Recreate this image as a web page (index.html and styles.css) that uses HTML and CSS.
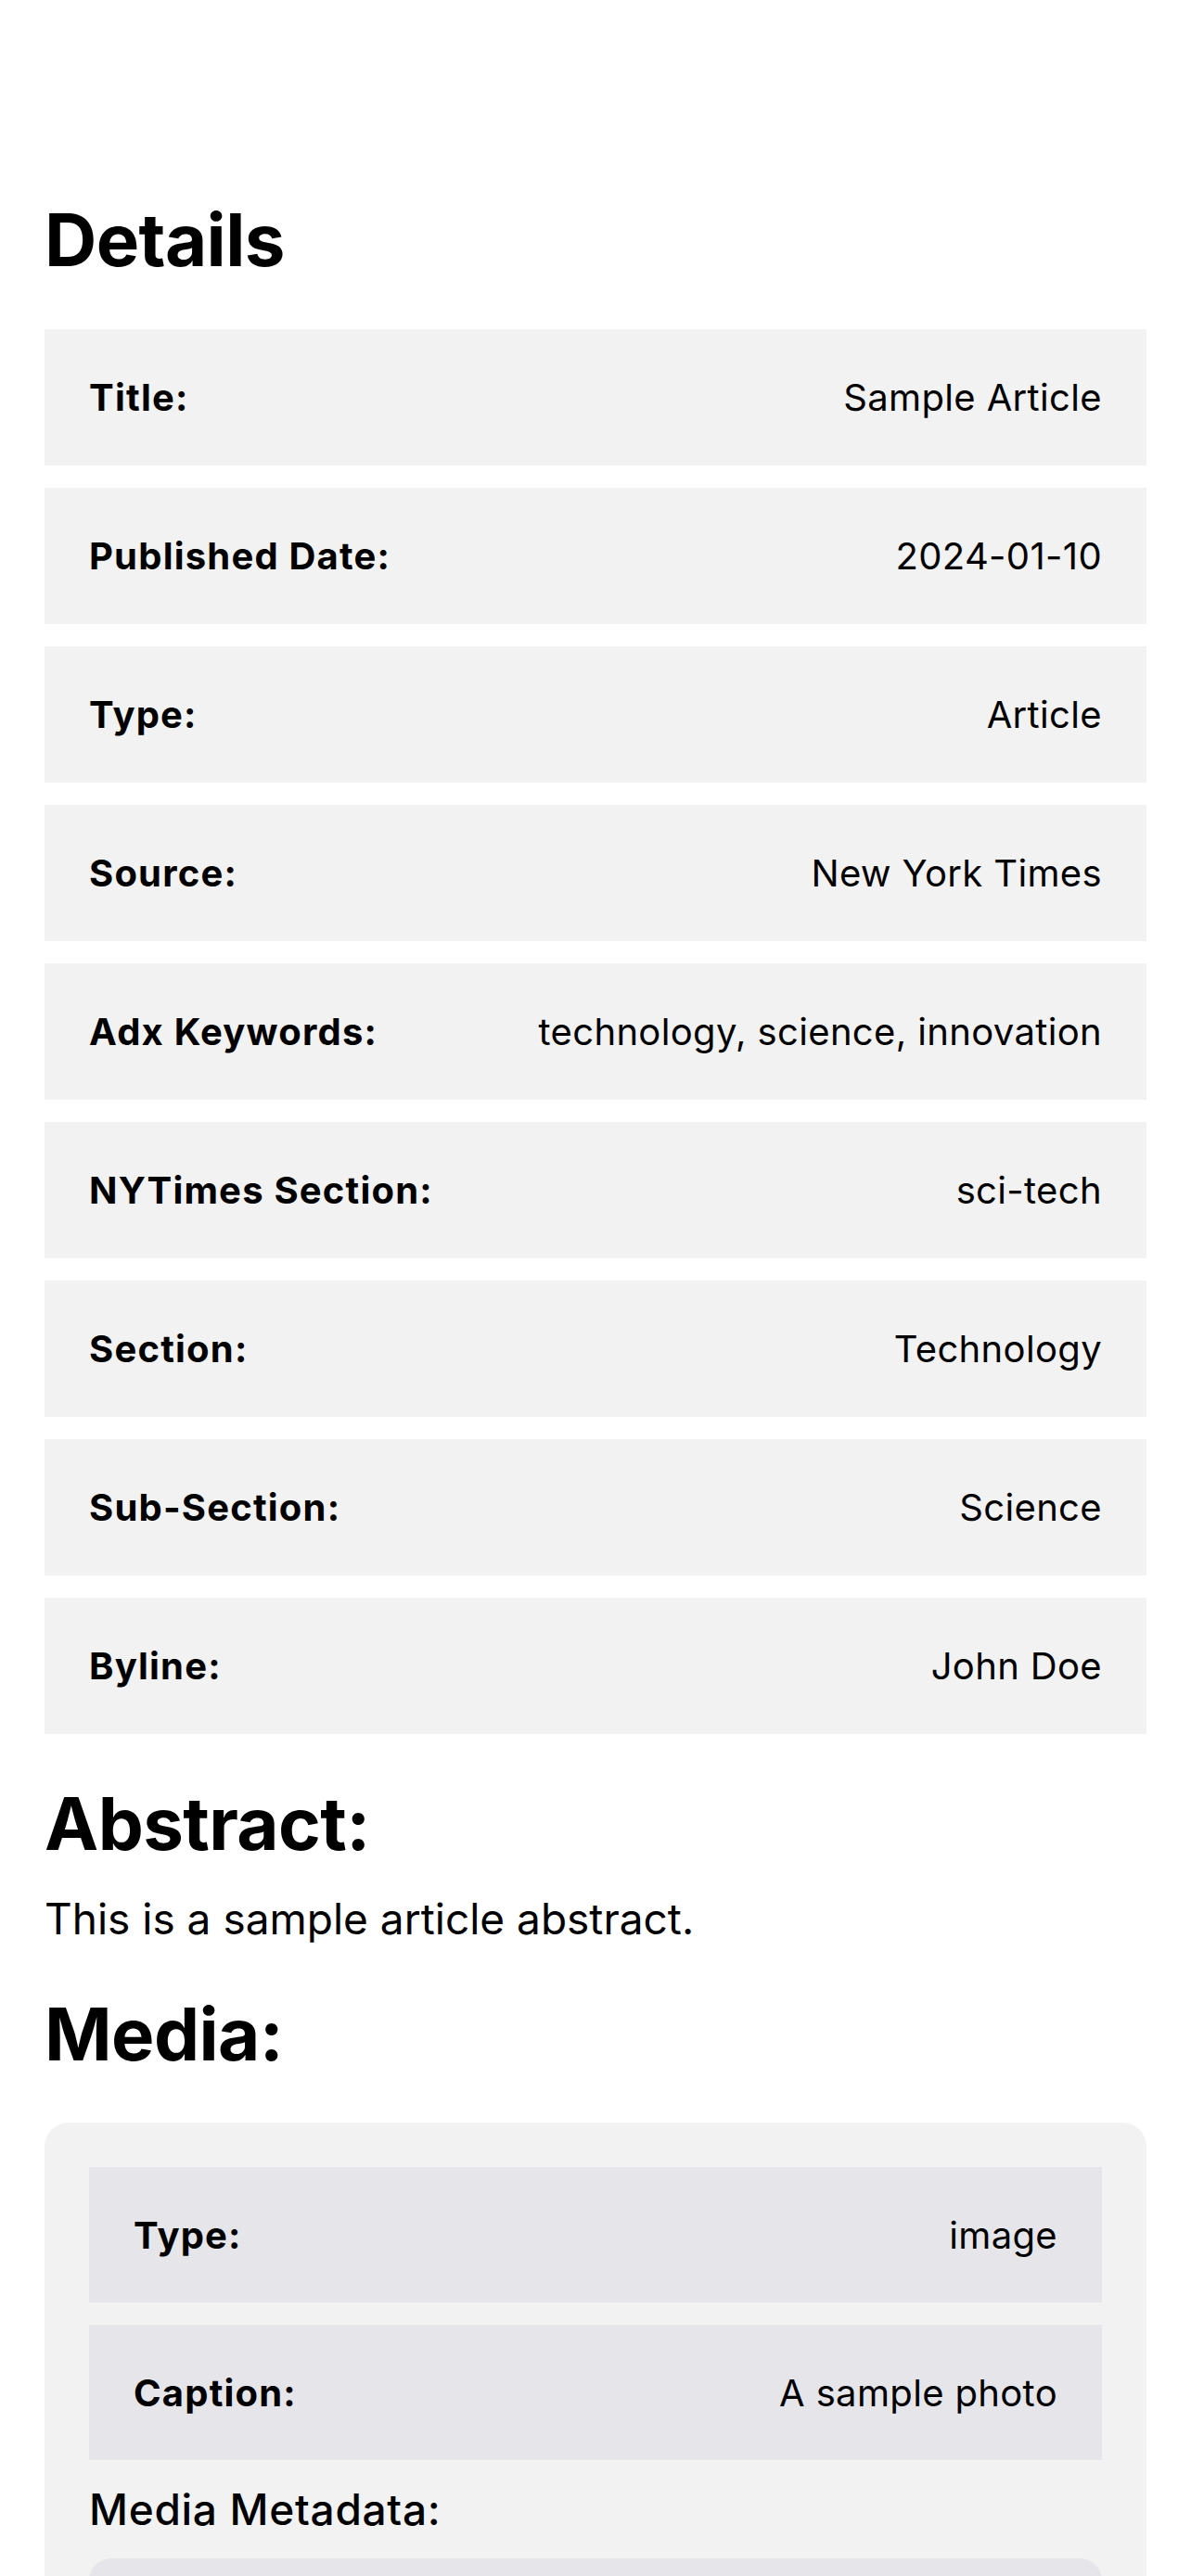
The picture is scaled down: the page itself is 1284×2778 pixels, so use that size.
FILE: index.html
```html
<!DOCTYPE html>
<html lang="en">
<head>
<meta charset="utf-8">
<title>Details</title>
<link rel="stylesheet" href="styles.css">
</head>
<body>
<main class="page">
  <h1 class="page-title">Details</h1>
  <div class="rows">
    <div class="row"><span class="label">Title:</span><span class="value">Sample Article</span></div>
    <div class="row"><span class="label">Published Date:</span><span class="value">2024-01-10</span></div>
    <div class="row"><span class="label">Type:</span><span class="value">Article</span></div>
    <div class="row"><span class="label">Source:</span><span class="value">New York Times</span></div>
    <div class="row"><span class="label">Adx Keywords:</span><span class="value">technology, science, innovation</span></div>
    <div class="row"><span class="label">NYTimes Section:</span><span class="value">sci-tech</span></div>
    <div class="row"><span class="label">Section:</span><span class="value">Technology</span></div>
    <div class="row"><span class="label">Sub-Section:</span><span class="value">Science</span></div>
    <div class="row"><span class="label">Byline:</span><span class="value">John Doe</span></div>
  </div>

  <h2 class="section-title">Abstract:</h2>
  <p class="abstract">This is a sample article abstract.</p>

  <h2 class="section-title">Media:</h2>
  <div class="media-card">
    <div class="row row-inner"><span class="label">Type:</span><span class="value">image</span></div>
    <div class="row row-inner"><span class="label">Caption:</span><span class="value">A sample photo</span></div>
    <h3 class="meta-title">Media Metadata:</h3>
    <div class="meta-box">
      <div class="meta-line"><span class="label">URL:</span><span class="value">https://example.com/photo.jpg</span></div>
      <div class="meta-line"><span class="label">Format:</span><span class="value">Standard Thumbnail</span></div>
      <div class="meta-line"><span class="label">Height:</span><span class="value">75</span></div>
      <div class="meta-line"><span class="label">Width:</span><span class="value">75</span></div>
    </div>
  </div>
</main>
</body>
</html>
```
FILE: styles.css
```css
html, body {
  margin: 0;
  padding: 0;
  background: #ffffff;
}

body {
  font-family: Inter, "Noto Sans", "Liberation Sans", sans-serif;
  color: #000000;
}

.page {
  padding: 212px 48px 80px;
}

.page-title {
  margin: 0 0 49px;
  font-size: 78px;
  line-height: 94px;
  font-weight: 700;
  letter-spacing: -0.6px;
}

.rows {
  display: flex;
  flex-direction: column;
  gap: 24px;
}

.row {
  display: flex;
  justify-content: space-between;
  align-items: center;
  padding: 50px 48px;
  background: #f2f2f2;
  font-size: 40px;
  line-height: 47px;
}

.label {
  font-weight: 700;
  letter-spacing: 1.2px;
}

.value {
  font-weight: 400;
  text-align: right;
  letter-spacing: 0.35px;
}

.section-title {
  margin: 50px 0 0;
  font-size: 78px;
  line-height: 94px;
  font-weight: 700;
  letter-spacing: -0.6px;
}

.abstract {
  margin: 27px 0 0;
  font-size: 46px;
  line-height: 56px;
}

.media-card {
  margin-top: 48px;
  padding: 48px;
  background: #f2f2f2;
  border-radius: 26px;
  display: flex;
  flex-direction: column;
  gap: 24px;
}

.row-inner {
  background: #e5e5ea;
  padding: 50px 48px 49px;
}

.meta-title {
  margin: 0;
  font-size: 46px;
  line-height: 58px;
  font-weight: 500;
  letter-spacing: 0.7px;
}

.meta-box {
  background: #e5e5ea;
  border-radius: 24px;
  padding: 48px;
  display: flex;
  flex-direction: column;
  gap: 24px;
  font-size: 40px;
  line-height: 47px;
}

.meta-line {
  display: flex;
  justify-content: space-between;
}
```
